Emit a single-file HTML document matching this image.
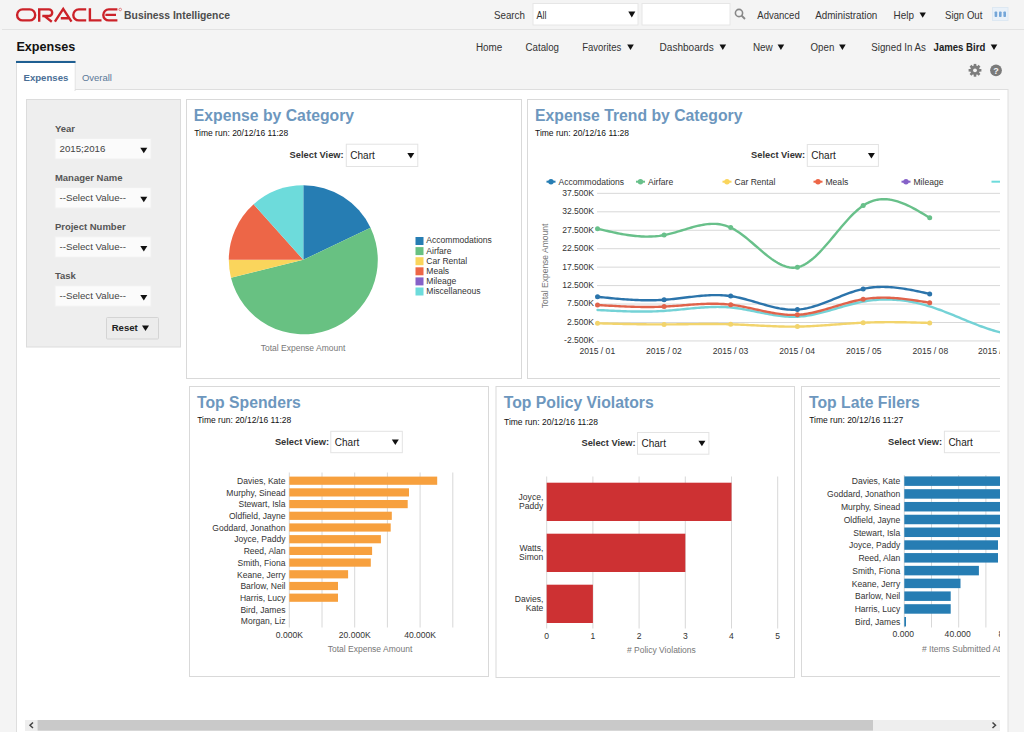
<!DOCTYPE html>
<html><head><meta charset="utf-8"><style>
html,body{margin:0;padding:0;width:1024px;height:732px;overflow:hidden;background:#f4f4f4}
svg{display:block}
text{font-family:"Liberation Sans", sans-serif}
</style></head><body>
<svg width="1024" height="732" viewBox="0 0 1024 732">
<defs><clipPath id="clipR"><rect x="0" y="0" width="1000" height="732"/></clipPath></defs>
<rect x="0" y="0" width="1024" height="732" fill="#f4f4f4" stroke="none" stroke-width="1" />
<line x1="2" y1="29.5" x2="1024" y2="29.5" stroke="#e2e2e2" stroke-width="1" />
<g fill="none" stroke="#cc2229" stroke-width="2.4">
<rect x="17.1" y="9.4" width="18.1" height="11" rx="5.5"/>
<path d="M39.2,21.7 V9.4 H48.9 A3.3,3.3 0 0 1 48.9,16 H42.3 M44.5,16.1 L51.8,21.7"/>
<path d="M54.9,21.7 L63.2,8.9 L71.5,21.7 M60.8,18.3 H69.4" stroke-linejoin="miter"/>
<path d="M86.2,9.4 H78.8 A5.5,5.5 0 0 0 78.8,20.4 H86.2"/>
<path d="M89.9,8.2 V20.4 H101.5"/>
<path d="M117.4,9.4 H108.8 A5.5,5.5 0 0 0 108.8,20.4 H117.4 M105.4,14.9 H116"/>
</g>
<circle cx="120.2" cy="9.5" r="1.3" fill="none" stroke="#cc2229" stroke-width="0.5"/>
<text transform="translate(124.1,18.7) scale(0.9689,1)" font-size="10.7" font-weight="bold" fill="#4d4d4d" text-anchor="start">Business Intelligence</text>
<text transform="translate(494.0,19) scale(0.9139,1)" font-size="10.7" font-weight="normal" fill="#333" text-anchor="start">Search</text>
<rect x="533" y="3.5" width="105" height="21.5" fill="#fff" stroke="#e6e6e6" stroke-width="1" />
<text transform="translate(536.5,19) scale(0.842,1)" font-size="10.7" font-weight="normal" fill="#333" text-anchor="start">All</text>
<path d="M628.3,11.5 L635.3,11.5 L631.8,17.5 Z" fill="#111"/>
<rect x="642" y="3.5" width="88" height="21.5" fill="#fff" stroke="#e6e6e6" stroke-width="1" />
<circle cx="739" cy="13" r="3.6" fill="none" stroke="#888" stroke-width="1.6"/>
<line x1="741.5" y1="15.5" x2="745" y2="19" stroke="#888" stroke-width="1.8" />
<text transform="translate(757.3,19) scale(0.8926,1)" font-size="10.7" font-weight="normal" fill="#333" text-anchor="start">Advanced</text>
<text transform="translate(815.2,19) scale(0.9176,1)" font-size="10.7" font-weight="normal" fill="#333" text-anchor="start">Administration</text>
<text transform="translate(893.6,19) scale(0.9278,1)" font-size="10.7" font-weight="normal" fill="#333" text-anchor="start">Help</text>
<text transform="translate(945.0,19) scale(0.8985,1)" font-size="10.7" font-weight="normal" fill="#333" text-anchor="start">Sign Out</text>
<path d="M919.5,12.6 L925.9000000000001,12.6 L922.7,17.8 Z" fill="#111"/>
<rect x="992.5" y="7.5" width="15.5" height="13" fill="#e9f1f9" stroke="#dde8f2" stroke-width="1" />
<rect x="994.6" y="11.5" width="2.6" height="5.5" fill="#74a6d8" stroke="none" stroke-width="1" rx="0.8"/>
<rect x="999.0" y="11.5" width="2.6" height="5.5" fill="#74a6d8" stroke="none" stroke-width="1" rx="0.8"/>
<rect x="1003.4" y="11.5" width="2.6" height="5.5" fill="#74a6d8" stroke="none" stroke-width="1" rx="0.8"/>
<text transform="translate(16.4,50.6) scale(1.0027,1)" font-size="12.6" font-weight="bold" fill="#111" text-anchor="start">Expenses</text>
<text transform="translate(475.9,50.6) scale(0.8989,1)" font-size="11" font-weight="normal" fill="#333" text-anchor="start">Home</text>
<text transform="translate(525.6,50.6) scale(0.8814,1)" font-size="11" font-weight="normal" fill="#333" text-anchor="start">Catalog</text>
<text transform="translate(582.2,50.6) scale(0.8649,1)" font-size="11" font-weight="normal" fill="#333" text-anchor="start">Favorites</text>
<text transform="translate(659.6,50.6) scale(0.9142,1)" font-size="11" font-weight="normal" fill="#333" text-anchor="start">Dashboards</text>
<text transform="translate(752.9,50.6) scale(0.9023,1)" font-size="11" font-weight="normal" fill="#333" text-anchor="start">New</text>
<text transform="translate(810.5,50.6) scale(0.8849,1)" font-size="11" font-weight="normal" fill="#333" text-anchor="start">Open</text>
<text transform="translate(871.3,50.6) scale(0.8856,1)" font-size="11" font-weight="normal" fill="#333" text-anchor="start">Signed In As</text>
<text transform="translate(933.6,50.6) scale(0.872,1)" font-size="11" font-weight="bold" fill="#222" text-anchor="start">James Bird</text>
<path d="M627.2,44.599999999999994 L633.8,44.599999999999994 L630.5,50.0 Z" fill="#111"/>
<path d="M719.5,44.599999999999994 L726.0999999999999,44.599999999999994 L722.8,50.0 Z" fill="#111"/>
<path d="M777.6,44.599999999999994 L784.1999999999999,44.599999999999994 L780.9,50.0 Z" fill="#111"/>
<path d="M839.1,44.599999999999994 L845.6999999999999,44.599999999999994 L842.4,50.0 Z" fill="#111"/>
<path d="M990.7,44.599999999999994 L997.3,44.599999999999994 L994,50.0 Z" fill="#111"/>
<rect x="16.5" y="89.5" width="991.5" height="732" fill="#fff" stroke="#dedede" stroke-width="1" />
<rect x="16.5" y="61" width="58.5" height="29.5" fill="#fff" stroke="#dedede" stroke-width="1" />
<rect x="16" y="61" width="59.5" height="2" fill="#1f5f92" stroke="none" stroke-width="1" />
<rect x="17" y="63" width="57.5" height="28" fill="#fff" stroke="none" stroke-width="1" />
<text x="23.5" y="80.7" font-size="9.6" font-weight="bold" fill="#4a6f96" text-anchor="start" >Expenses</text>
<text x="81.9" y="80.5" font-size="9.5" font-weight="normal" fill="#5a7898" text-anchor="start" >Overall</text>
<rect x="973.7" y="63.9" width="2.6" height="4" fill="#7d7d7d" transform="rotate(0 975 70.3)"/>
<rect x="973.7" y="63.9" width="2.6" height="4" fill="#7d7d7d" transform="rotate(45 975 70.3)"/>
<rect x="973.7" y="63.9" width="2.6" height="4" fill="#7d7d7d" transform="rotate(90 975 70.3)"/>
<rect x="973.7" y="63.9" width="2.6" height="4" fill="#7d7d7d" transform="rotate(135 975 70.3)"/>
<rect x="973.7" y="63.9" width="2.6" height="4" fill="#7d7d7d" transform="rotate(180 975 70.3)"/>
<rect x="973.7" y="63.9" width="2.6" height="4" fill="#7d7d7d" transform="rotate(225 975 70.3)"/>
<rect x="973.7" y="63.9" width="2.6" height="4" fill="#7d7d7d" transform="rotate(270 975 70.3)"/>
<rect x="973.7" y="63.9" width="2.6" height="4" fill="#7d7d7d" transform="rotate(315 975 70.3)"/>
<circle cx="975" cy="70.3" r="4.7" fill="#7d7d7d"/>
<circle cx="975" cy="70.3" r="1.9" fill="#f4f4f4"/>
<circle cx="996" cy="70.3" r="5.9" fill="#7a7a7a"/>
<text x="996" y="73.8" font-size="9" font-weight="bold" fill="#f4f4f4" text-anchor="middle" >?</text>
<rect x="26.5" y="99.5" width="154" height="247.5" fill="#eeeeee" stroke="#dcdcdc" stroke-width="1" />
<text x="54.9" y="132.0" font-size="9.5" font-weight="bold" fill="#555" text-anchor="start" >Year</text>
<rect x="55" y="138.5" width="96" height="20.5" fill="#fbfbfb" stroke="#f0f0f0" stroke-width="1" />
<text x="59.5" y="152.0" font-size="9.7" font-weight="normal" fill="#444" text-anchor="start" >2015;2016</text>
<path d="M140.3,147.75 L147.3,147.75 L143.8,153.25 Z" fill="#111"/>
<text x="54.9" y="181.1" font-size="9.5" font-weight="bold" fill="#555" text-anchor="start" >Manager Name</text>
<rect x="55" y="187.6" width="96" height="20.5" fill="#fbfbfb" stroke="#f0f0f0" stroke-width="1" />
<text x="59.5" y="201.1" font-size="9.7" font-weight="normal" fill="#444" text-anchor="start" >--Select Value--</text>
<path d="M140.3,196.85 L147.3,196.85 L143.8,202.35 Z" fill="#111"/>
<text x="54.9" y="230.2" font-size="9.5" font-weight="bold" fill="#555" text-anchor="start" >Project Number</text>
<rect x="55" y="236.7" width="96" height="20.5" fill="#fbfbfb" stroke="#f0f0f0" stroke-width="1" />
<text x="59.5" y="250.2" font-size="9.7" font-weight="normal" fill="#444" text-anchor="start" >--Select Value--</text>
<path d="M140.3,245.95 L147.3,245.95 L143.8,251.45 Z" fill="#111"/>
<text x="54.9" y="279.3" font-size="9.5" font-weight="bold" fill="#555" text-anchor="start" >Task</text>
<rect x="55" y="285.8" width="96" height="20.5" fill="#fbfbfb" stroke="#f0f0f0" stroke-width="1" />
<text x="59.5" y="299.3" font-size="9.7" font-weight="normal" fill="#444" text-anchor="start" >--Select Value--</text>
<path d="M140.3,295.05 L147.3,295.05 L143.8,300.55 Z" fill="#111"/>
<rect x="106.5" y="317.5" width="52" height="21.5" fill="#ececec" stroke="#d4d4d4" stroke-width="1" rx="1"/>
<text x="111.7" y="331.4" font-size="9.6" font-weight="bold" fill="#222" text-anchor="start" >Reset</text>
<path d="M142.0,325.45 L149.0,325.45 L145.5,330.95 Z" fill="#111"/>
<g clip-path="url(#clipR)">
<rect x="186.5" y="99.5" width="335.0" height="279.0" fill="#fff" stroke="#d9d9d9" stroke-width="1" />
<rect x="527.5" y="99.5" width="482.5" height="279.0" fill="#fff" stroke="#d9d9d9" stroke-width="1" />
<rect x="189.5" y="386.5" width="299.0" height="290.0" fill="#fff" stroke="#d9d9d9" stroke-width="1" />
<rect x="496" y="386.5" width="298.5" height="291.0" fill="#fff" stroke="#d9d9d9" stroke-width="1" />
<rect x="801.5" y="386.5" width="208.5" height="290.0" fill="#fff" stroke="#d9d9d9" stroke-width="1" />
<text transform="translate(193.8,120.89999999999999) scale(0.985,1)" font-size="16" font-weight="bold" fill="#6d97be" text-anchor="start">Expense by Category</text>
<text x="194.2" y="136.2" font-size="8.5" font-weight="normal" fill="#111" text-anchor="start" >Time run: 20/12/16 11:28</text>
<text x="289.6" y="158.3" font-size="9.3" font-weight="bold" fill="#333" text-anchor="start" >Select View:</text>
<rect x="346.3" y="144.2" width="71.5" height="22.30000000000001" fill="#fff" stroke="#e3e3e3" stroke-width="1" />
<text x="350.3" y="159.3" font-size="10" font-weight="normal" fill="#222" text-anchor="start" >Chart</text>
<path d="M407.3,153.05 L414.3,153.05 L410.8,158.55 Z" fill="#111"/>
<text transform="translate(535,120.89999999999999) scale(0.985,1)" font-size="16" font-weight="bold" fill="#6d97be" text-anchor="start">Expense Trend by Category</text>
<text x="535" y="136.2" font-size="8.5" font-weight="normal" fill="#111" text-anchor="start" >Time run: 20/12/16 11:28</text>
<text x="751.1" y="158.3" font-size="9.3" font-weight="bold" fill="#333" text-anchor="start" >Select View:</text>
<rect x="807.3" y="144.5" width="71.10000000000002" height="21.900000000000006" fill="#fff" stroke="#e3e3e3" stroke-width="1" />
<text x="811.3" y="159.3" font-size="10" font-weight="normal" fill="#222" text-anchor="start" >Chart</text>
<path d="M867.9,153.05 L874.9,153.05 L871.4,158.55 Z" fill="#111"/>
<text transform="translate(197,407.6) scale(0.985,1)" font-size="16" font-weight="bold" fill="#6d97be" text-anchor="start">Top Spenders</text>
<text x="197.2" y="422.8" font-size="8.5" font-weight="normal" fill="#111" text-anchor="start" >Time run: 20/12/16 11:28</text>
<text x="274.9" y="444.8" font-size="9.3" font-weight="bold" fill="#333" text-anchor="start" >Select View:</text>
<rect x="330.8" y="431.3" width="71.5" height="21.399999999999977" fill="#fff" stroke="#e3e3e3" stroke-width="1" />
<text x="334.8" y="445.8" font-size="10" font-weight="normal" fill="#222" text-anchor="start" >Chart</text>
<path d="M391.8,439.55 L398.8,439.55 L395.3,445.05 Z" fill="#111"/>
<text transform="translate(503.7,407.90000000000003) scale(0.985,1)" font-size="16" font-weight="bold" fill="#6d97be" text-anchor="start">Top Policy Violators</text>
<text x="504" y="424.5" font-size="8.5" font-weight="normal" fill="#111" text-anchor="start" >Time run: 20/12/16 11:28</text>
<text x="581.5" y="446" font-size="9.3" font-weight="bold" fill="#333" text-anchor="start" >Select View:</text>
<rect x="637.5" y="432.5" width="71.39999999999998" height="21.69999999999999" fill="#fff" stroke="#e3e3e3" stroke-width="1" />
<text x="641.5" y="447" font-size="10" font-weight="normal" fill="#222" text-anchor="start" >Chart</text>
<path d="M698.4,440.75 L705.4,440.75 L701.9,446.25 Z" fill="#111"/>
<text transform="translate(809,407.6) scale(0.985,1)" font-size="16" font-weight="bold" fill="#6d97be" text-anchor="start">Top Late Filers</text>
<text x="809.2" y="422.7" font-size="8.5" font-weight="normal" fill="#111" text-anchor="start" >Time run: 20/12/16 11:27</text>
<text x="888" y="444.8" font-size="9.3" font-weight="bold" fill="#333" text-anchor="start" >Select View:</text>
<rect x="944.4" y="431.2" width="67.60000000000002" height="21.5" fill="#fff" stroke="#e3e3e3" stroke-width="1" />
<text x="948.4" y="445.8" font-size="10" font-weight="normal" fill="#222" text-anchor="start" >Chart</text>
<path d="M1001.5,439.55 L1008.5,439.55 L1005,445.05 Z" fill="#111"/>
<path d="M303.3,259.8 L303.30,185.30 A74.5,74.5 0 0 1 370.54,227.73 Z" fill="#267db3"/>
<path d="M303.3,259.8 L370.54,227.73 A74.5,74.5 0 1 1 230.98,277.70 Z" fill="#68c182"/>
<path d="M303.3,259.8 L230.98,277.70 A74.5,74.5 0 0 1 228.80,259.80 Z" fill="#fad55c"/>
<path d="M303.3,259.8 L228.80,259.80 A74.5,74.5 0 0 1 253.64,204.26 Z" fill="#ed6647"/>
<path d="M303.3,259.8 L253.64,204.26 A74.5,74.5 0 0 1 303.30,185.30 Z" fill="#6ddbdb"/>
<text x="303" y="351" font-size="8.5" font-weight="normal" fill="#777" text-anchor="middle" >Total Expense Amount</text>
<rect x="415.5" y="237.0" width="8" height="8" fill="#267db3" stroke="none" stroke-width="1" />
<text transform="translate(426.3,243.4) scale(0.93,1)" font-size="9.2" font-weight="normal" fill="#333" text-anchor="start">Accommodations</text>
<rect x="415.5" y="247.1" width="8" height="8" fill="#68c182" stroke="none" stroke-width="1" />
<text transform="translate(426.3,253.5) scale(0.93,1)" font-size="9.2" font-weight="normal" fill="#333" text-anchor="start">Airfare</text>
<rect x="415.5" y="257.2" width="8" height="8" fill="#fad55c" stroke="none" stroke-width="1" />
<text transform="translate(426.3,263.59999999999997) scale(0.93,1)" font-size="9.2" font-weight="normal" fill="#333" text-anchor="start">Car Rental</text>
<rect x="415.5" y="267.3" width="8" height="8" fill="#ed6647" stroke="none" stroke-width="1" />
<text transform="translate(426.3,273.7) scale(0.93,1)" font-size="9.2" font-weight="normal" fill="#333" text-anchor="start">Meals</text>
<rect x="415.5" y="277.4" width="8" height="8" fill="#8561c8" stroke="none" stroke-width="1" />
<text transform="translate(426.3,283.79999999999995) scale(0.93,1)" font-size="9.2" font-weight="normal" fill="#333" text-anchor="start">Mileage</text>
<rect x="415.5" y="287.5" width="8" height="8" fill="#6ddbdb" stroke="none" stroke-width="1" />
<text transform="translate(426.3,293.9) scale(0.93,1)" font-size="9.2" font-weight="normal" fill="#333" text-anchor="start">Miscellaneous</text>
<line x1="597" y1="193.35" x2="1000" y2="193.35" stroke="#d8d8d8" stroke-width="1" />
<text transform="translate(594,195.75) scale(0.93,1)" font-size="9.2" font-weight="normal" fill="#333" text-anchor="end">37.500K</text>
<line x1="597" y1="211.8" x2="1000" y2="211.8" stroke="#d8d8d8" stroke-width="1" />
<text transform="translate(594,214.20000000000002) scale(0.93,1)" font-size="9.2" font-weight="normal" fill="#333" text-anchor="end">32.500K</text>
<line x1="597" y1="230.25" x2="1000" y2="230.25" stroke="#d8d8d8" stroke-width="1" />
<text transform="translate(594,232.65) scale(0.93,1)" font-size="9.2" font-weight="normal" fill="#333" text-anchor="end">27.500K</text>
<line x1="597" y1="248.7" x2="1000" y2="248.7" stroke="#d8d8d8" stroke-width="1" />
<text transform="translate(594,251.1) scale(0.93,1)" font-size="9.2" font-weight="normal" fill="#333" text-anchor="end">22.500K</text>
<line x1="597" y1="267.15" x2="1000" y2="267.15" stroke="#d8d8d8" stroke-width="1" />
<text transform="translate(594,269.54999999999995) scale(0.93,1)" font-size="9.2" font-weight="normal" fill="#333" text-anchor="end">17.500K</text>
<line x1="597" y1="285.6" x2="1000" y2="285.6" stroke="#d8d8d8" stroke-width="1" />
<text transform="translate(594,288.0) scale(0.93,1)" font-size="9.2" font-weight="normal" fill="#333" text-anchor="end">12.500K</text>
<line x1="597" y1="304.05" x2="1000" y2="304.05" stroke="#d8d8d8" stroke-width="1" />
<text transform="translate(594,306.45) scale(0.93,1)" font-size="9.2" font-weight="normal" fill="#333" text-anchor="end">7.500K</text>
<line x1="597" y1="322.5" x2="1000" y2="322.5" stroke="#d8d8d8" stroke-width="1" />
<text transform="translate(594,324.9) scale(0.93,1)" font-size="9.2" font-weight="normal" fill="#333" text-anchor="end">2.500K</text>
<line x1="597" y1="340.95" x2="1000" y2="340.95" stroke="#d8d8d8" stroke-width="1" />
<text transform="translate(594,343.34999999999997) scale(0.93,1)" font-size="9.2" font-weight="normal" fill="#333" text-anchor="end">-2.500K</text>
<text x="0" y="0" font-size="8.5" font-weight="normal" fill="#777" text-anchor="middle" transform="translate(547.6,266) rotate(-90)">Total Expense Amount</text>
<text transform="translate(597.3,354) scale(0.93,1)" font-size="9.2" font-weight="normal" fill="#333" text-anchor="middle">2015 / 01</text>
<text transform="translate(663.9,354) scale(0.93,1)" font-size="9.2" font-weight="normal" fill="#333" text-anchor="middle">2015 / 02</text>
<text transform="translate(730.5,354) scale(0.93,1)" font-size="9.2" font-weight="normal" fill="#333" text-anchor="middle">2015 / 03</text>
<text transform="translate(797.0999999999999,354) scale(0.93,1)" font-size="9.2" font-weight="normal" fill="#333" text-anchor="middle">2015 / 04</text>
<text transform="translate(863.6999999999999,354) scale(0.93,1)" font-size="9.2" font-weight="normal" fill="#333" text-anchor="middle">2015 / 05</text>
<text transform="translate(930.3,354) scale(0.93,1)" font-size="9.2" font-weight="normal" fill="#333" text-anchor="middle">2015 / 08</text>
<text transform="translate(995.6999999999998,354) scale(0.93,1)" font-size="9.2" font-weight="normal" fill="#333" text-anchor="middle">2015 / 09</text>
<path d="M597.5,310.00 L599.5,310.10 L601.5,310.21 L603.5,310.31 L605.5,310.42 L607.5,310.52 L609.5,310.62 L611.5,310.71 L613.5,310.80 L615.5,310.89 L617.5,310.98 L619.5,311.06 L621.5,311.14 L623.5,311.21 L625.5,311.28 L627.5,311.34 L629.5,311.39 L631.5,311.44 L633.5,311.48 L635.5,311.51 L637.5,311.54 L639.5,311.55 L641.5,311.56 L643.5,311.56 L645.5,311.55 L647.5,311.53 L649.5,311.49 L651.5,311.45 L653.5,311.40 L655.5,311.33 L657.5,311.25 L659.5,311.16 L661.5,311.06 L663.5,310.94 L665.5,310.81 L667.5,310.66 L669.5,310.50 L671.5,310.34 L673.5,310.16 L675.5,309.98 L677.5,309.79 L679.5,309.60 L681.5,309.40 L683.5,309.20 L685.5,309.00 L687.5,308.80 L689.5,308.61 L691.5,308.42 L693.5,308.23 L695.5,308.05 L697.5,307.88 L699.5,307.72 L701.5,307.57 L703.5,307.43 L705.5,307.30 L707.5,307.19 L709.5,307.10 L711.5,307.03 L713.5,306.97 L715.5,306.94 L717.5,306.92 L719.5,306.93 L721.5,306.97 L723.5,307.03 L725.5,307.12 L727.5,307.24 L729.5,307.39 L731.5,307.58 L733.5,307.79 L735.5,308.04 L737.5,308.31 L739.5,308.60 L741.5,308.92 L743.5,309.26 L745.5,309.61 L747.5,309.98 L749.5,310.36 L751.5,310.75 L753.5,311.15 L755.5,311.55 L757.5,311.96 L759.5,312.36 L761.5,312.76 L763.5,313.16 L765.5,313.55 L767.5,313.93 L769.5,314.29 L771.5,314.64 L773.5,314.98 L775.5,315.29 L777.5,315.58 L779.5,315.85 L781.5,316.08 L783.5,316.29 L785.5,316.47 L787.5,316.61 L789.5,316.71 L791.5,316.77 L793.5,316.79 L795.5,316.77 L797.5,316.70 L799.5,316.57 L801.5,316.41 L803.5,316.19 L805.5,315.94 L807.5,315.64 L809.5,315.31 L811.5,314.95 L813.5,314.55 L815.5,314.12 L817.5,313.67 L819.5,313.19 L821.5,312.69 L823.5,312.17 L825.5,311.63 L827.5,311.08 L829.5,310.51 L831.5,309.94 L833.5,309.36 L835.5,308.77 L837.5,308.19 L839.5,307.60 L841.5,307.02 L843.5,306.44 L845.5,305.88 L847.5,305.32 L849.5,304.77 L851.5,304.24 L853.5,303.73 L855.5,303.24 L857.5,302.78 L859.5,302.34 L861.5,301.93 L863.5,301.54 L865.5,301.20 L867.5,300.88 L869.5,300.60 L871.5,300.35 L873.5,300.13 L875.5,299.94 L877.5,299.79 L879.5,299.66 L881.5,299.57 L883.5,299.51 L885.5,299.48 L887.5,299.49 L889.5,299.52 L891.5,299.58 L893.5,299.68 L895.5,299.80 L897.5,299.95 L899.5,300.14 L901.5,300.35 L903.5,300.59 L905.5,300.86 L907.5,301.16 L909.5,301.49 L911.5,301.85 L913.5,302.24 L915.5,302.65 L917.5,303.10 L919.5,303.57 L921.5,304.07 L923.5,304.59 L925.5,305.15 L927.5,305.73 L929.5,306.34 L931.5,306.97 L933.5,307.63 L935.5,308.32 L937.5,309.02 L939.5,309.75 L941.5,310.49 L943.5,311.25 L945.5,312.02 L947.5,312.81 L949.5,313.61 L951.5,314.42 L953.5,315.23 L955.5,316.06 L957.5,316.88 L959.5,317.71 L961.5,318.54 L963.5,319.37 L965.5,320.20 L967.5,321.02 L969.5,321.83 L971.5,322.64 L973.5,323.44 L975.5,324.23 L977.5,325.00 L979.5,325.76 L981.5,326.50 L983.5,327.22 L985.5,327.93 L987.5,328.61 L989.5,329.26 L991.5,329.90 L993.5,330.50 L995.5,331.08 L997.5,331.62 L999.5,332.14 L1001.5,332.62 L1003.5,333.08 L1005.5,333.51 L1007.5,333.91 L1009.5,334.29 L1011.5,334.64 L1013.5,334.96 L1015.5,335.26 L1017.5,335.54 L1019.5,335.80 L1021.5,336.04 L1023.5,336.26 L1025.5,336.46 L1027.5,336.65 L1029.5,336.81 L1031.5,336.96 L1033.5,337.10 L1035.5,337.22 L1037.5,337.33 L1039.5,337.43 L1041.5,337.51 L1043.5,337.59 L1045.5,337.66 L1047.5,337.72 L1049.5,337.77 L1051.5,337.81 L1053.5,337.85 L1055.5,337.89 L1057.5,337.92 L1059.5,337.95 L1061.5,337.98 L1062.9,338.00" fill="none" stroke="#74d2d6" stroke-width="2.4" stroke-linejoin="round" stroke-linecap="round"/>
<path d="M597.5,323.30 L599.5,323.35 L601.5,323.40 L603.5,323.46 L605.5,323.51 L607.5,323.56 L609.5,323.61 L611.5,323.66 L613.5,323.71 L615.5,323.76 L617.5,323.80 L619.5,323.85 L621.5,323.90 L623.5,323.94 L625.5,323.98 L627.5,324.02 L629.5,324.06 L631.5,324.10 L633.5,324.14 L635.5,324.17 L637.5,324.20 L639.5,324.23 L641.5,324.26 L643.5,324.29 L645.5,324.31 L647.5,324.33 L649.5,324.35 L651.5,324.37 L653.5,324.38 L655.5,324.39 L657.5,324.40 L659.5,324.40 L661.5,324.40 L663.5,324.40 L665.5,324.40 L667.5,324.39 L669.5,324.38 L671.5,324.36 L673.5,324.34 L675.5,324.33 L677.5,324.31 L679.5,324.28 L681.5,324.26 L683.5,324.24 L685.5,324.22 L687.5,324.19 L689.5,324.17 L691.5,324.15 L693.5,324.13 L695.5,324.10 L697.5,324.09 L699.5,324.07 L701.5,324.06 L703.5,324.04 L705.5,324.03 L707.5,324.03 L709.5,324.03 L711.5,324.03 L713.5,324.03 L715.5,324.04 L717.5,324.06 L719.5,324.08 L721.5,324.10 L723.5,324.14 L725.5,324.17 L727.5,324.22 L729.5,324.27 L731.5,324.32 L733.5,324.39 L735.5,324.46 L737.5,324.54 L739.5,324.62 L741.5,324.70 L743.5,324.79 L745.5,324.89 L747.5,324.98 L749.5,325.08 L751.5,325.18 L753.5,325.29 L755.5,325.39 L757.5,325.49 L759.5,325.59 L761.5,325.69 L763.5,325.79 L765.5,325.88 L767.5,325.98 L769.5,326.07 L771.5,326.15 L773.5,326.23 L775.5,326.31 L777.5,326.37 L779.5,326.44 L781.5,326.49 L783.5,326.54 L785.5,326.58 L787.5,326.61 L789.5,326.63 L791.5,326.64 L793.5,326.63 L795.5,326.62 L797.5,326.60 L799.5,326.56 L801.5,326.51 L803.5,326.45 L805.5,326.38 L807.5,326.30 L809.5,326.22 L811.5,326.12 L813.5,326.01 L815.5,325.90 L817.5,325.78 L819.5,325.66 L821.5,325.52 L823.5,325.39 L825.5,325.25 L827.5,325.11 L829.5,324.96 L831.5,324.81 L833.5,324.66 L835.5,324.51 L837.5,324.36 L839.5,324.21 L841.5,324.07 L843.5,323.92 L845.5,323.77 L847.5,323.63 L849.5,323.49 L851.5,323.36 L853.5,323.23 L855.5,323.11 L857.5,322.99 L859.5,322.88 L861.5,322.78 L863.5,322.69 L865.5,322.60 L867.5,322.52 L869.5,322.46 L871.5,322.39 L873.5,322.34 L875.5,322.30 L877.5,322.26 L879.5,322.23 L881.5,322.20 L883.5,322.18 L885.5,322.17 L887.5,322.16 L889.5,322.16 L891.5,322.16 L893.5,322.17 L895.5,322.19 L897.5,322.21 L899.5,322.23 L901.5,322.25 L903.5,322.28 L905.5,322.32 L907.5,322.35 L909.5,322.39 L911.5,322.44 L913.5,322.48 L915.5,322.53 L917.5,322.58 L919.5,322.63 L921.5,322.68 L923.5,322.73 L925.5,322.79 L927.5,322.84 L929.5,322.89 L929.7,322.90" fill="none" stroke="#f2d46c" stroke-width="2.4" stroke-linejoin="round" stroke-linecap="round"/>
<circle cx="597.50" cy="323.30" r="2.5" fill="#f2d46c"/>
<circle cx="664.10" cy="324.40" r="2.5" fill="#f2d46c"/>
<circle cx="730.70" cy="324.30" r="2.5" fill="#f2d46c"/>
<circle cx="797.40" cy="326.60" r="2.5" fill="#f2d46c"/>
<circle cx="863.20" cy="322.70" r="2.5" fill="#f2d46c"/>
<circle cx="929.70" cy="322.90" r="2.5" fill="#f2d46c"/>
<path d="M597.5,305.00 L599.5,305.12 L601.5,305.24 L603.5,305.36 L605.5,305.47 L607.5,305.59 L609.5,305.70 L611.5,305.82 L613.5,305.92 L615.5,306.03 L617.5,306.13 L619.5,306.23 L621.5,306.33 L623.5,306.41 L625.5,306.50 L627.5,306.58 L629.5,306.65 L631.5,306.72 L633.5,306.78 L635.5,306.83 L637.5,306.88 L639.5,306.92 L641.5,306.95 L643.5,306.97 L645.5,306.98 L647.5,306.98 L649.5,306.98 L651.5,306.96 L653.5,306.93 L655.5,306.90 L657.5,306.85 L659.5,306.79 L661.5,306.71 L663.5,306.63 L665.5,306.53 L667.5,306.42 L669.5,306.30 L671.5,306.17 L673.5,306.03 L675.5,305.89 L677.5,305.74 L679.5,305.59 L681.5,305.43 L683.5,305.28 L685.5,305.12 L687.5,304.97 L689.5,304.81 L691.5,304.67 L693.5,304.53 L695.5,304.39 L697.5,304.27 L699.5,304.16 L701.5,304.05 L703.5,303.96 L705.5,303.88 L707.5,303.82 L709.5,303.78 L711.5,303.75 L713.5,303.75 L715.5,303.76 L717.5,303.80 L719.5,303.86 L721.5,303.94 L723.5,304.06 L725.5,304.20 L727.5,304.37 L729.5,304.57 L731.5,304.80 L733.5,305.06 L735.5,305.35 L737.5,305.67 L739.5,306.01 L741.5,306.38 L743.5,306.76 L745.5,307.16 L747.5,307.57 L749.5,308.00 L751.5,308.43 L753.5,308.87 L755.5,309.31 L757.5,309.75 L759.5,310.19 L761.5,310.63 L763.5,311.06 L765.5,311.48 L767.5,311.89 L769.5,312.28 L771.5,312.65 L773.5,313.01 L775.5,313.34 L777.5,313.65 L779.5,313.93 L781.5,314.18 L783.5,314.40 L785.5,314.58 L787.5,314.73 L789.5,314.83 L791.5,314.89 L793.5,314.91 L795.5,314.88 L797.5,314.79 L799.5,314.66 L801.5,314.47 L803.5,314.24 L805.5,313.96 L807.5,313.64 L809.5,313.28 L811.5,312.89 L813.5,312.46 L815.5,312.00 L817.5,311.51 L819.5,311.00 L821.5,310.47 L823.5,309.91 L825.5,309.35 L827.5,308.76 L829.5,308.17 L831.5,307.57 L833.5,306.96 L835.5,306.35 L837.5,305.74 L839.5,305.14 L841.5,304.54 L843.5,303.95 L845.5,303.37 L847.5,302.80 L849.5,302.26 L851.5,301.73 L853.5,301.22 L855.5,300.75 L857.5,300.30 L859.5,299.88 L861.5,299.50 L863.5,299.15 L865.5,298.84 L867.5,298.57 L869.5,298.34 L871.5,298.15 L873.5,297.98 L875.5,297.86 L877.5,297.76 L879.5,297.69 L881.5,297.66 L883.5,297.65 L885.5,297.67 L887.5,297.72 L889.5,297.79 L891.5,297.89 L893.5,298.01 L895.5,298.15 L897.5,298.31 L899.5,298.49 L901.5,298.68 L903.5,298.90 L905.5,299.13 L907.5,299.37 L909.5,299.63 L911.5,299.90 L913.5,300.18 L915.5,300.47 L917.5,300.77 L919.5,301.07 L921.5,301.38 L923.5,301.70 L925.5,302.02 L927.5,302.34 L929.5,302.67 L929.7,302.70" fill="none" stroke="#e0634b" stroke-width="2.4" stroke-linejoin="round" stroke-linecap="round"/>
<circle cx="597.50" cy="305.00" r="2.5" fill="#e0634b"/>
<circle cx="664.10" cy="306.60" r="2.5" fill="#e0634b"/>
<circle cx="730.70" cy="304.70" r="2.5" fill="#e0634b"/>
<circle cx="797.40" cy="314.80" r="2.5" fill="#e0634b"/>
<circle cx="863.20" cy="299.20" r="2.5" fill="#e0634b"/>
<circle cx="929.70" cy="302.70" r="2.5" fill="#e0634b"/>
<path d="M597.5,296.80 L599.5,297.00 L601.5,297.21 L603.5,297.41 L605.5,297.61 L607.5,297.81 L609.5,298.01 L611.5,298.20 L613.5,298.38 L615.5,298.57 L617.5,298.74 L619.5,298.91 L621.5,299.08 L623.5,299.23 L625.5,299.38 L627.5,299.52 L629.5,299.65 L631.5,299.77 L633.5,299.88 L635.5,299.98 L637.5,300.07 L639.5,300.14 L641.5,300.20 L643.5,300.25 L645.5,300.28 L647.5,300.30 L649.5,300.31 L651.5,300.29 L653.5,300.26 L655.5,300.22 L657.5,300.15 L659.5,300.07 L661.5,299.96 L663.5,299.84 L665.5,299.70 L667.5,299.54 L669.5,299.36 L671.5,299.16 L673.5,298.95 L675.5,298.73 L677.5,298.51 L679.5,298.27 L681.5,298.03 L683.5,297.79 L685.5,297.54 L687.5,297.30 L689.5,297.06 L691.5,296.82 L693.5,296.59 L695.5,296.37 L697.5,296.16 L699.5,295.96 L701.5,295.78 L703.5,295.62 L705.5,295.47 L707.5,295.35 L709.5,295.25 L711.5,295.17 L713.5,295.12 L715.5,295.10 L717.5,295.11 L719.5,295.15 L721.5,295.23 L723.5,295.35 L725.5,295.50 L727.5,295.70 L729.5,295.94 L731.5,296.22 L733.5,296.55 L735.5,296.92 L737.5,297.33 L739.5,297.77 L741.5,298.24 L743.5,298.74 L745.5,299.26 L747.5,299.81 L749.5,300.37 L751.5,300.94 L753.5,301.52 L755.5,302.11 L757.5,302.70 L759.5,303.29 L761.5,303.88 L763.5,304.46 L765.5,305.02 L767.5,305.57 L769.5,306.10 L771.5,306.61 L773.5,307.10 L775.5,307.55 L777.5,307.97 L779.5,308.36 L781.5,308.70 L783.5,309.00 L785.5,309.26 L787.5,309.46 L789.5,309.61 L791.5,309.70 L793.5,309.73 L795.5,309.70 L797.5,309.59 L799.5,309.42 L801.5,309.18 L803.5,308.87 L805.5,308.51 L807.5,308.09 L809.5,307.61 L811.5,307.09 L813.5,306.52 L815.5,305.91 L817.5,305.27 L819.5,304.59 L821.5,303.88 L823.5,303.14 L825.5,302.39 L827.5,301.61 L829.5,300.82 L831.5,300.02 L833.5,299.21 L835.5,298.40 L837.5,297.59 L839.5,296.78 L841.5,295.99 L843.5,295.20 L845.5,294.43 L847.5,293.68 L849.5,292.95 L851.5,292.25 L853.5,291.58 L855.5,290.95 L857.5,290.35 L859.5,289.80 L861.5,289.29 L863.5,288.83 L865.5,288.43 L867.5,288.08 L869.5,287.77 L871.5,287.52 L873.5,287.31 L875.5,287.14 L877.5,287.02 L879.5,286.94 L881.5,286.90 L883.5,286.90 L885.5,286.94 L887.5,287.01 L889.5,287.12 L891.5,287.26 L893.5,287.42 L895.5,287.62 L897.5,287.85 L899.5,288.10 L901.5,288.37 L903.5,288.67 L905.5,288.99 L907.5,289.32 L909.5,289.68 L911.5,290.05 L913.5,290.44 L915.5,290.84 L917.5,291.25 L919.5,291.67 L921.5,292.09 L923.5,292.53 L925.5,292.97 L927.5,293.41 L929.5,293.86 L929.7,293.90" fill="none" stroke="#2b74ab" stroke-width="2.4" stroke-linejoin="round" stroke-linecap="round"/>
<circle cx="597.50" cy="296.80" r="2.5" fill="#2b74ab"/>
<circle cx="664.10" cy="299.80" r="2.5" fill="#2b74ab"/>
<circle cx="730.70" cy="296.10" r="2.5" fill="#2b74ab"/>
<circle cx="797.40" cy="309.60" r="2.5" fill="#2b74ab"/>
<circle cx="863.20" cy="288.90" r="2.5" fill="#2b74ab"/>
<circle cx="929.70" cy="293.90" r="2.5" fill="#2b74ab"/>
<path d="M597.5,228.70 L599.5,229.18 L601.5,229.65 L603.5,230.12 L605.5,230.59 L607.5,231.04 L609.5,231.50 L611.5,231.94 L613.5,232.37 L615.5,232.79 L617.5,233.20 L619.5,233.59 L621.5,233.96 L623.5,234.32 L625.5,234.65 L627.5,234.97 L629.5,235.26 L631.5,235.53 L633.5,235.77 L635.5,235.98 L637.5,236.16 L639.5,236.32 L641.5,236.44 L643.5,236.53 L645.5,236.58 L647.5,236.59 L649.5,236.57 L651.5,236.51 L653.5,236.40 L655.5,236.26 L657.5,236.07 L659.5,235.83 L661.5,235.54 L663.5,235.21 L665.5,234.83 L667.5,234.39 L669.5,233.92 L671.5,233.41 L673.5,232.87 L675.5,232.31 L677.5,231.72 L679.5,231.12 L681.5,230.51 L683.5,229.89 L685.5,229.28 L687.5,228.67 L689.5,228.08 L691.5,227.50 L693.5,226.95 L695.5,226.42 L697.5,225.93 L699.5,225.48 L701.5,225.07 L703.5,224.71 L705.5,224.41 L707.5,224.17 L709.5,223.99 L711.5,223.89 L713.5,223.86 L715.5,223.92 L717.5,224.06 L719.5,224.30 L721.5,224.63 L723.5,225.07 L725.5,225.62 L727.5,226.29 L729.5,227.07 L731.5,227.98 L733.5,229.01 L735.5,230.16 L737.5,231.41 L739.5,232.76 L741.5,234.19 L743.5,235.70 L745.5,237.27 L747.5,238.89 L749.5,240.56 L751.5,242.26 L753.5,243.98 L755.5,245.72 L757.5,247.46 L759.5,249.19 L761.5,250.91 L763.5,252.59 L765.5,254.24 L767.5,255.85 L769.5,257.39 L771.5,258.87 L773.5,260.27 L775.5,261.58 L777.5,262.79 L779.5,263.90 L781.5,264.88 L783.5,265.74 L785.5,266.46 L787.5,267.03 L789.5,267.44 L791.5,267.68 L793.5,267.74 L795.5,267.61 L797.5,267.28 L799.5,266.74 L801.5,266.01 L803.5,265.09 L805.5,264.00 L807.5,262.74 L809.5,261.32 L811.5,259.77 L813.5,258.08 L815.5,256.27 L817.5,254.35 L819.5,252.34 L821.5,250.23 L823.5,248.05 L825.5,245.81 L827.5,243.51 L829.5,241.16 L831.5,238.79 L833.5,236.39 L835.5,233.98 L837.5,231.58 L839.5,229.18 L841.5,226.81 L843.5,224.48 L845.5,222.18 L847.5,219.95 L849.5,217.78 L851.5,215.69 L853.5,213.69 L855.5,211.78 L857.5,209.99 L859.5,208.33 L861.5,206.79 L863.5,205.40 L865.5,204.16 L867.5,203.07 L869.5,202.13 L871.5,201.32 L873.5,200.65 L875.5,200.10 L877.5,199.69 L879.5,199.39 L881.5,199.21 L883.5,199.14 L885.5,199.18 L887.5,199.32 L889.5,199.56 L891.5,199.89 L893.5,200.31 L895.5,200.81 L897.5,201.39 L899.5,202.05 L901.5,202.77 L903.5,203.56 L905.5,204.41 L907.5,205.32 L909.5,206.28 L911.5,207.29 L913.5,208.33 L915.5,209.42 L917.5,210.54 L919.5,211.68 L921.5,212.85 L923.5,214.04 L925.5,215.25 L927.5,216.46 L929.5,217.68 L929.7,217.80" fill="none" stroke="#68c08a" stroke-width="2.4" stroke-linejoin="round" stroke-linecap="round"/>
<circle cx="597.50" cy="228.70" r="2.5" fill="#68c08a"/>
<circle cx="664.10" cy="235.10" r="2.5" fill="#68c08a"/>
<circle cx="730.70" cy="227.60" r="2.5" fill="#68c08a"/>
<circle cx="797.40" cy="267.30" r="2.5" fill="#68c08a"/>
<circle cx="863.20" cy="205.60" r="2.5" fill="#68c08a"/>
<circle cx="929.70" cy="217.80" r="2.5" fill="#68c08a"/>
<line x1="546.5" y1="181.7" x2="555.5" y2="181.7" stroke="#267db3" stroke-width="2" />
<circle cx="551" cy="181.7" r="2.7" fill="#267db3"/>
<text transform="translate(558.5,184.8) scale(0.93,1)" font-size="9.2" font-weight="normal" fill="#333" text-anchor="start">Accommodations</text>
<line x1="636.0" y1="181.7" x2="645.0" y2="181.7" stroke="#68c08a" stroke-width="2" />
<circle cx="640.5" cy="181.7" r="2.7" fill="#68c08a"/>
<text transform="translate(648.0,184.8) scale(0.93,1)" font-size="9.2" font-weight="normal" fill="#333" text-anchor="start">Airfare</text>
<line x1="722.5" y1="181.7" x2="731.5" y2="181.7" stroke="#fad55c" stroke-width="2" />
<circle cx="727" cy="181.7" r="2.7" fill="#fad55c"/>
<text transform="translate(734.5,184.8) scale(0.93,1)" font-size="9.2" font-weight="normal" fill="#333" text-anchor="start">Car Rental</text>
<line x1="813.5" y1="181.7" x2="822.5" y2="181.7" stroke="#ed6647" stroke-width="2" />
<circle cx="818" cy="181.7" r="2.7" fill="#ed6647"/>
<text transform="translate(825.5,184.8) scale(0.93,1)" font-size="9.2" font-weight="normal" fill="#333" text-anchor="start">Meals</text>
<line x1="901.5" y1="181.7" x2="910.5" y2="181.7" stroke="#8561c8" stroke-width="2" />
<circle cx="906" cy="181.7" r="2.7" fill="#8561c8"/>
<text transform="translate(913.5,184.8) scale(0.93,1)" font-size="9.2" font-weight="normal" fill="#333" text-anchor="start">Mileage</text>
<line x1="991.5" y1="181.7" x2="1000.5" y2="181.7" stroke="#6ddbdb" stroke-width="2" />
<line x1="289.3" y1="472.5" x2="289.3" y2="627.5" stroke="#d8d8d8" stroke-width="1" />
<line x1="322.0" y1="472.5" x2="322.0" y2="627.5" stroke="#d8d8d8" stroke-width="1" />
<line x1="354.70000000000005" y1="472.5" x2="354.70000000000005" y2="627.5" stroke="#d8d8d8" stroke-width="1" />
<line x1="387.40000000000003" y1="472.5" x2="387.40000000000003" y2="627.5" stroke="#d8d8d8" stroke-width="1" />
<line x1="420.1" y1="472.5" x2="420.1" y2="627.5" stroke="#d8d8d8" stroke-width="1" />
<line x1="452.8" y1="472.5" x2="452.8" y2="627.5" stroke="#d8d8d8" stroke-width="1" />
<rect x="289.3" y="476.6" width="147.89999999999998" height="8.2" fill="#f7a03e" stroke="none" stroke-width="1" />
<text transform="translate(285.5,483.9) scale(0.92,1)" font-size="9.3" font-weight="normal" fill="#333" text-anchor="end">Davies, Kate</text>
<rect x="289.3" y="488.3" width="119.69999999999999" height="8.2" fill="#f7a03e" stroke="none" stroke-width="1" />
<text transform="translate(285.5,495.59999999999997) scale(0.92,1)" font-size="9.3" font-weight="normal" fill="#333" text-anchor="end">Murphy, Sinead</text>
<rect x="289.3" y="500.0" width="118.39999999999998" height="8.2" fill="#f7a03e" stroke="none" stroke-width="1" />
<text transform="translate(285.5,507.29999999999995) scale(0.92,1)" font-size="9.3" font-weight="normal" fill="#333" text-anchor="end">Stewart, Isla</text>
<rect x="289.3" y="511.70000000000005" width="102.5" height="8.2" fill="#f7a03e" stroke="none" stroke-width="1" />
<text transform="translate(285.5,519.0) scale(0.92,1)" font-size="9.3" font-weight="normal" fill="#333" text-anchor="end">Oldfield, Jayne</text>
<rect x="289.3" y="523.4" width="101.39999999999998" height="8.2" fill="#f7a03e" stroke="none" stroke-width="1" />
<text transform="translate(285.5,530.6999999999999) scale(0.92,1)" font-size="9.3" font-weight="normal" fill="#333" text-anchor="end">Goddard, Jonathon</text>
<rect x="289.3" y="535.1" width="91.59999999999997" height="8.2" fill="#f7a03e" stroke="none" stroke-width="1" />
<text transform="translate(285.5,542.4) scale(0.92,1)" font-size="9.3" font-weight="normal" fill="#333" text-anchor="end">Joyce, Paddy</text>
<rect x="289.3" y="546.8000000000001" width="82.80000000000001" height="8.2" fill="#f7a03e" stroke="none" stroke-width="1" />
<text transform="translate(285.5,554.1) scale(0.92,1)" font-size="9.3" font-weight="normal" fill="#333" text-anchor="end">Reed, Alan</text>
<rect x="289.3" y="558.5" width="81.5" height="8.2" fill="#f7a03e" stroke="none" stroke-width="1" />
<text transform="translate(285.5,565.8) scale(0.92,1)" font-size="9.3" font-weight="normal" fill="#333" text-anchor="end">Smith, Fiona</text>
<rect x="289.3" y="570.2" width="58.80000000000001" height="8.2" fill="#f7a03e" stroke="none" stroke-width="1" />
<text transform="translate(285.5,577.5) scale(0.92,1)" font-size="9.3" font-weight="normal" fill="#333" text-anchor="end">Keane, Jerry</text>
<rect x="289.3" y="581.9" width="48.69999999999999" height="8.2" fill="#f7a03e" stroke="none" stroke-width="1" />
<text transform="translate(285.5,589.1999999999999) scale(0.92,1)" font-size="9.3" font-weight="normal" fill="#333" text-anchor="end">Barlow, Neil</text>
<rect x="289.3" y="593.6" width="48.69999999999999" height="8.2" fill="#f7a03e" stroke="none" stroke-width="1" />
<text transform="translate(285.5,600.9) scale(0.92,1)" font-size="9.3" font-weight="normal" fill="#333" text-anchor="end">Harris, Lucy</text>
<text transform="translate(285.5,612.6) scale(0.92,1)" font-size="9.3" font-weight="normal" fill="#333" text-anchor="end">Bird, James</text>
<text transform="translate(285.5,624.3) scale(0.92,1)" font-size="9.3" font-weight="normal" fill="#333" text-anchor="end">Morgan, Liz</text>
<text transform="translate(289.3,637.5) scale(0.93,1)" font-size="9.2" font-weight="normal" fill="#333" text-anchor="middle">0.000K</text>
<text transform="translate(354.70000000000005,637.5) scale(0.93,1)" font-size="9.2" font-weight="normal" fill="#333" text-anchor="middle">20.000K</text>
<text transform="translate(420.1,637.5) scale(0.93,1)" font-size="9.2" font-weight="normal" fill="#333" text-anchor="middle">40.000K</text>
<text x="370" y="651.5" font-size="8.5" font-weight="normal" fill="#777" text-anchor="middle" >Total Expense Amount</text>
<line x1="546.7" y1="476.5" x2="546.7" y2="628.5" stroke="#d8d8d8" stroke-width="1" />
<line x1="592.9000000000001" y1="476.5" x2="592.9000000000001" y2="628.5" stroke="#d8d8d8" stroke-width="1" />
<line x1="639.1" y1="476.5" x2="639.1" y2="628.5" stroke="#d8d8d8" stroke-width="1" />
<line x1="685.3000000000001" y1="476.5" x2="685.3000000000001" y2="628.5" stroke="#d8d8d8" stroke-width="1" />
<line x1="731.5" y1="476.5" x2="731.5" y2="628.5" stroke="#d8d8d8" stroke-width="1" />
<line x1="777.7" y1="476.5" x2="777.7" y2="628.5" stroke="#d8d8d8" stroke-width="1" />
<rect x="546.7" y="482.7" width="184.8" height="38.3" fill="#cd3133" stroke="none" stroke-width="1" />
<text transform="translate(543.3,500.09999999999997) scale(0.92,1)" font-size="9.3" font-weight="normal" fill="#333" text-anchor="end">Joyce,</text>
<text transform="translate(543.3,509.3) scale(0.92,1)" font-size="9.3" font-weight="normal" fill="#333" text-anchor="end">Paddy</text>
<rect x="546.7" y="533.7" width="138.60000000000002" height="38.3" fill="#cd3133" stroke="none" stroke-width="1" />
<text transform="translate(543.3,551.1) scale(0.92,1)" font-size="9.3" font-weight="normal" fill="#333" text-anchor="end">Watts,</text>
<text transform="translate(543.3,560.3000000000001) scale(0.92,1)" font-size="9.3" font-weight="normal" fill="#333" text-anchor="end">Simon</text>
<rect x="546.7" y="584.7" width="46.2" height="38.3" fill="#cd3133" stroke="none" stroke-width="1" />
<text transform="translate(543.3,602.1) scale(0.92,1)" font-size="9.3" font-weight="normal" fill="#333" text-anchor="end">Davies,</text>
<text transform="translate(543.3,611.3000000000001) scale(0.92,1)" font-size="9.3" font-weight="normal" fill="#333" text-anchor="end">Kate</text>
<text transform="translate(546.7,639) scale(0.93,1)" font-size="9.2" font-weight="normal" fill="#333" text-anchor="middle">0</text>
<text transform="translate(592.9000000000001,639) scale(0.93,1)" font-size="9.2" font-weight="normal" fill="#333" text-anchor="middle">1</text>
<text transform="translate(639.1,639) scale(0.93,1)" font-size="9.2" font-weight="normal" fill="#333" text-anchor="middle">2</text>
<text transform="translate(685.3000000000001,639) scale(0.93,1)" font-size="9.2" font-weight="normal" fill="#333" text-anchor="middle">3</text>
<text transform="translate(731.5,639) scale(0.93,1)" font-size="9.2" font-weight="normal" fill="#333" text-anchor="middle">4</text>
<text transform="translate(777.7,639) scale(0.93,1)" font-size="9.2" font-weight="normal" fill="#333" text-anchor="middle">5</text>
<text x="661.4" y="653" font-size="8.5" font-weight="normal" fill="#777" text-anchor="middle" ># Policy Violations</text>
<line x1="904.3" y1="475" x2="904.3" y2="627.5" stroke="#d8d8d8" stroke-width="1" />
<line x1="931.5" y1="475" x2="931.5" y2="627.5" stroke="#d8d8d8" stroke-width="1" />
<line x1="958.6999999999999" y1="475" x2="958.6999999999999" y2="627.5" stroke="#d8d8d8" stroke-width="1" />
<line x1="985.9" y1="475" x2="985.9" y2="627.5" stroke="#d8d8d8" stroke-width="1" />
<line x1="1013.0999999999999" y1="475" x2="1013.0999999999999" y2="627.5" stroke="#d8d8d8" stroke-width="1" />
<rect x="904.3" y="476.4" width="100.70000000000005" height="9.5" fill="#267db3" stroke="none" stroke-width="1" />
<text transform="translate(900.2,484.4) scale(0.92,1)" font-size="9.3" font-weight="normal" fill="#333" text-anchor="end">Davies, Kate</text>
<rect x="904.3" y="489.17999999999995" width="100.70000000000005" height="9.5" fill="#267db3" stroke="none" stroke-width="1" />
<text transform="translate(900.2,497.17999999999995) scale(0.92,1)" font-size="9.3" font-weight="normal" fill="#333" text-anchor="end">Goddard, Jonathon</text>
<rect x="904.3" y="501.96" width="100.70000000000005" height="9.5" fill="#267db3" stroke="none" stroke-width="1" />
<text transform="translate(900.2,509.96) scale(0.92,1)" font-size="9.3" font-weight="normal" fill="#333" text-anchor="end">Murphy, Sinead</text>
<rect x="904.3" y="514.74" width="100.70000000000005" height="9.5" fill="#267db3" stroke="none" stroke-width="1" />
<text transform="translate(900.2,522.74) scale(0.92,1)" font-size="9.3" font-weight="normal" fill="#333" text-anchor="end">Oldfield, Jayne</text>
<rect x="904.3" y="527.52" width="100.70000000000005" height="9.5" fill="#267db3" stroke="none" stroke-width="1" />
<text transform="translate(900.2,535.52) scale(0.92,1)" font-size="9.3" font-weight="normal" fill="#333" text-anchor="end">Stewart, Isla</text>
<rect x="904.3" y="540.3" width="93.70000000000005" height="9.5" fill="#267db3" stroke="none" stroke-width="1" />
<text transform="translate(900.2,548.3) scale(0.92,1)" font-size="9.3" font-weight="normal" fill="#333" text-anchor="end">Joyce, Paddy</text>
<rect x="904.3" y="553.0799999999999" width="93.70000000000005" height="9.5" fill="#267db3" stroke="none" stroke-width="1" />
<text transform="translate(900.2,561.0799999999999) scale(0.92,1)" font-size="9.3" font-weight="normal" fill="#333" text-anchor="end">Reed, Alan</text>
<rect x="904.3" y="565.86" width="74.60000000000002" height="9.5" fill="#267db3" stroke="none" stroke-width="1" />
<text transform="translate(900.2,573.86) scale(0.92,1)" font-size="9.3" font-weight="normal" fill="#333" text-anchor="end">Smith, Fiona</text>
<rect x="904.3" y="578.64" width="56.200000000000045" height="9.5" fill="#267db3" stroke="none" stroke-width="1" />
<text transform="translate(900.2,586.64) scale(0.92,1)" font-size="9.3" font-weight="normal" fill="#333" text-anchor="end">Keane, Jerry</text>
<rect x="904.3" y="591.42" width="46.40000000000009" height="9.5" fill="#267db3" stroke="none" stroke-width="1" />
<text transform="translate(900.2,599.42) scale(0.92,1)" font-size="9.3" font-weight="normal" fill="#333" text-anchor="end">Barlow, Neil</text>
<rect x="904.3" y="604.1999999999999" width="46.40000000000009" height="9.5" fill="#267db3" stroke="none" stroke-width="1" />
<text transform="translate(900.2,612.1999999999999) scale(0.92,1)" font-size="9.3" font-weight="normal" fill="#333" text-anchor="end">Harris, Lucy</text>
<rect x="904.3" y="616.98" width="1.7000000000000455" height="9.5" fill="#267db3" stroke="none" stroke-width="1" />
<text transform="translate(900.2,624.98) scale(0.92,1)" font-size="9.3" font-weight="normal" fill="#333" text-anchor="end">Bird, James</text>
<text transform="translate(903.3,636.8) scale(0.93,1)" font-size="9.2" font-weight="normal" fill="#333" text-anchor="middle">0.000</text>
<text transform="translate(957.6999999999999,636.8) scale(0.93,1)" font-size="9.2" font-weight="normal" fill="#333" text-anchor="middle">40.000</text>
<text transform="translate(1011.5999999999999,636.8) scale(0.93,1)" font-size="9.2" font-weight="normal" fill="#333" text-anchor="middle">80.000</text>
<text x="922" y="651.5" font-size="8.5" font-weight="normal" fill="#777" text-anchor="start" ># Items Submitted At Late</text>
</g>
<rect x="25" y="720" width="975" height="11" fill="#eeeeee" stroke="none" stroke-width="1" />
<rect x="37.6" y="720" width="835.4" height="10.6" fill="#c9c9c9" stroke="none" stroke-width="1" />
<path d="M33,722.5 L30,725.3 L33,728" fill="none" stroke="#444" stroke-width="1.5"/>
<path d="M992.5,722.5 L995.5,725.3 L992.5,728" fill="none" stroke="#444" stroke-width="1.5"/>
</svg>
</body></html>
